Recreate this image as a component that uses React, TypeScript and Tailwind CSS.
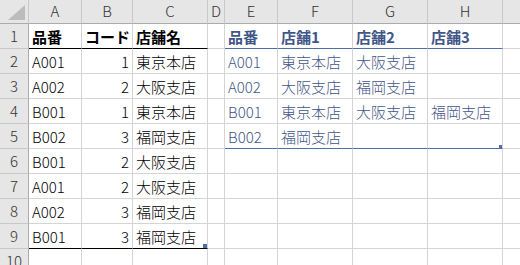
import React from "react";

// column I is off the right edge, so its letter is not drawn
const cols = ["A", "B", "C", "D", "E", "F", "G", "H", ""];

const left: [string, string, string][] = [
  ["A001", "1", "東京本店"],
  ["A002", "2", "大阪支店"],
  ["B001", "1", "東京本店"],
  ["B002", "3", "福岡支店"],
  ["B001", "2", "大阪支店"],
  ["A001", "2", "大阪支店"],
  ["A002", "3", "福岡支店"],
  ["B001", "3", "福岡支店"],
];

const right: string[][] = [
  ["A001", "東京本店", "大阪支店", ""],
  ["A002", "大阪支店", "福岡支店", ""],
  ["B001", "東京本店", "大阪支店", "福岡支店"],
  ["B002", "福岡支店", "", ""],
];

const cell = "h-[25px] border-r border-b border-[#d4d4d4] flex items-center px-[3px] whitespace-nowrap overflow-hidden text-[15px] leading-none";
const body = "font-light";
const head = "font-bold text-[13px]";
const blue = "text-[#3f5687]";

function RowHead({ n }: { n: number }) {
  return (
    <div className="h-[25px] bg-[#e6e6e6] border-r border-b border-r-[#ababab] border-b-[#c8c8c8] flex items-center justify-center text-[15px] font-light text-[#333]">
      {n}
    </div>
  );
}

export default function App() {
  const rows: React.ReactNode[] = [];

  // row 1: table headers
  rows.push(
    <React.Fragment key="r1">
      <RowHead n={1} />
      <div className={`${cell} border-b-black ${head} text-black`}>品番</div>
      <div className={`${cell} border-b-black ${head} text-black`}>コード</div>
      <div className={`${cell} border-b-black ${head} text-black`}>店舗名</div>
      <div className={cell}></div>
      <div className={`${cell} border-b-[#4f6ea8] ${head} ${blue}`}>品番</div>
      <div className={`${cell} border-b-[#4f6ea8] ${head} ${blue}`}>店舗1</div>
      <div className={`${cell} border-b-[#4f6ea8] ${head} ${blue}`}>店舗2</div>
      <div className={`${cell} border-b-[#4f6ea8] ${head} ${blue}`}>店舗3</div>
      <div className={cell}></div>
    </React.Fragment>
  );

  for (let i = 0; i < 9; i++) {
    const l = left[i];
    const r = right[i];
    const lastL = i === 7;
    const lastR = i === 3;
    const lb = lastL ? "border-b-black" : "";
    const rb = lastR ? "border-b-[#4f6ea8]" : "";
    rows.push(
      <React.Fragment key={`r${i + 2}`}>
        <RowHead n={i + 2} />
        <div className={`${cell} ${lb} ${body} text-black`}>{l?.[0]}</div>
        <div className={`${cell} ${lb} ${body} justify-end text-black`}>{l?.[1]}</div>
        <div className={`${cell} ${lb} ${body} relative text-black`}>
          {l?.[2]}
          {lastL && <span className="absolute right-0 bottom-0 w-1 h-1 bg-[#4f6ea8]" />}
        </div>
        <div className={cell}></div>
        <div className={`${cell} ${rb} ${body} ${blue}`}>{r?.[0]}</div>
        <div className={`${cell} ${rb} ${body} ${blue}`}>{r?.[1]}</div>
        <div className={`${cell} ${rb} ${body} ${blue}`}>{r?.[2]}</div>
        <div className={`${cell} ${rb} ${body} relative ${blue}`}>
          {r?.[3]}
          {lastR && <span className="absolute -right-px -bottom-px w-1 h-1 bg-[#4f6ea8]" />}
        </div>
        <div className={cell}></div>
      </React.Fragment>
    );
  }

  return (
    <div className="w-[520px] h-[265px] overflow-hidden bg-white font-['Noto_Sans_CJK_JP',sans-serif]">
      <div className="grid w-[580px] grid-cols-[29px_53px_51px_75px_17px_53px_75px_75px_75px_1fr]">
        {/* column headers */}
        <div className="h-6 bg-[#e6e6e6] border-r border-b border-r-[#c8c8c8] border-b-[#ababab] flex items-end justify-end pr-[3px] pb-[3px]">
          <svg width="17" height="15" viewBox="0 0 17 15">
            <polygon points="17,0 17,15 0,15" fill="#bcbcbc" />
          </svg>
        </div>
        {cols.map((c, i) => (
          <div
            key={i}
            className="h-6 bg-[#e6e6e6] border-r border-b border-r-[#c8c8c8] border-b-[#ababab] flex items-center justify-center text-[15px] font-light text-[#333]"
          >
            {c}
          </div>
        ))}
        {rows}
      </div>
    </div>
  );
}
